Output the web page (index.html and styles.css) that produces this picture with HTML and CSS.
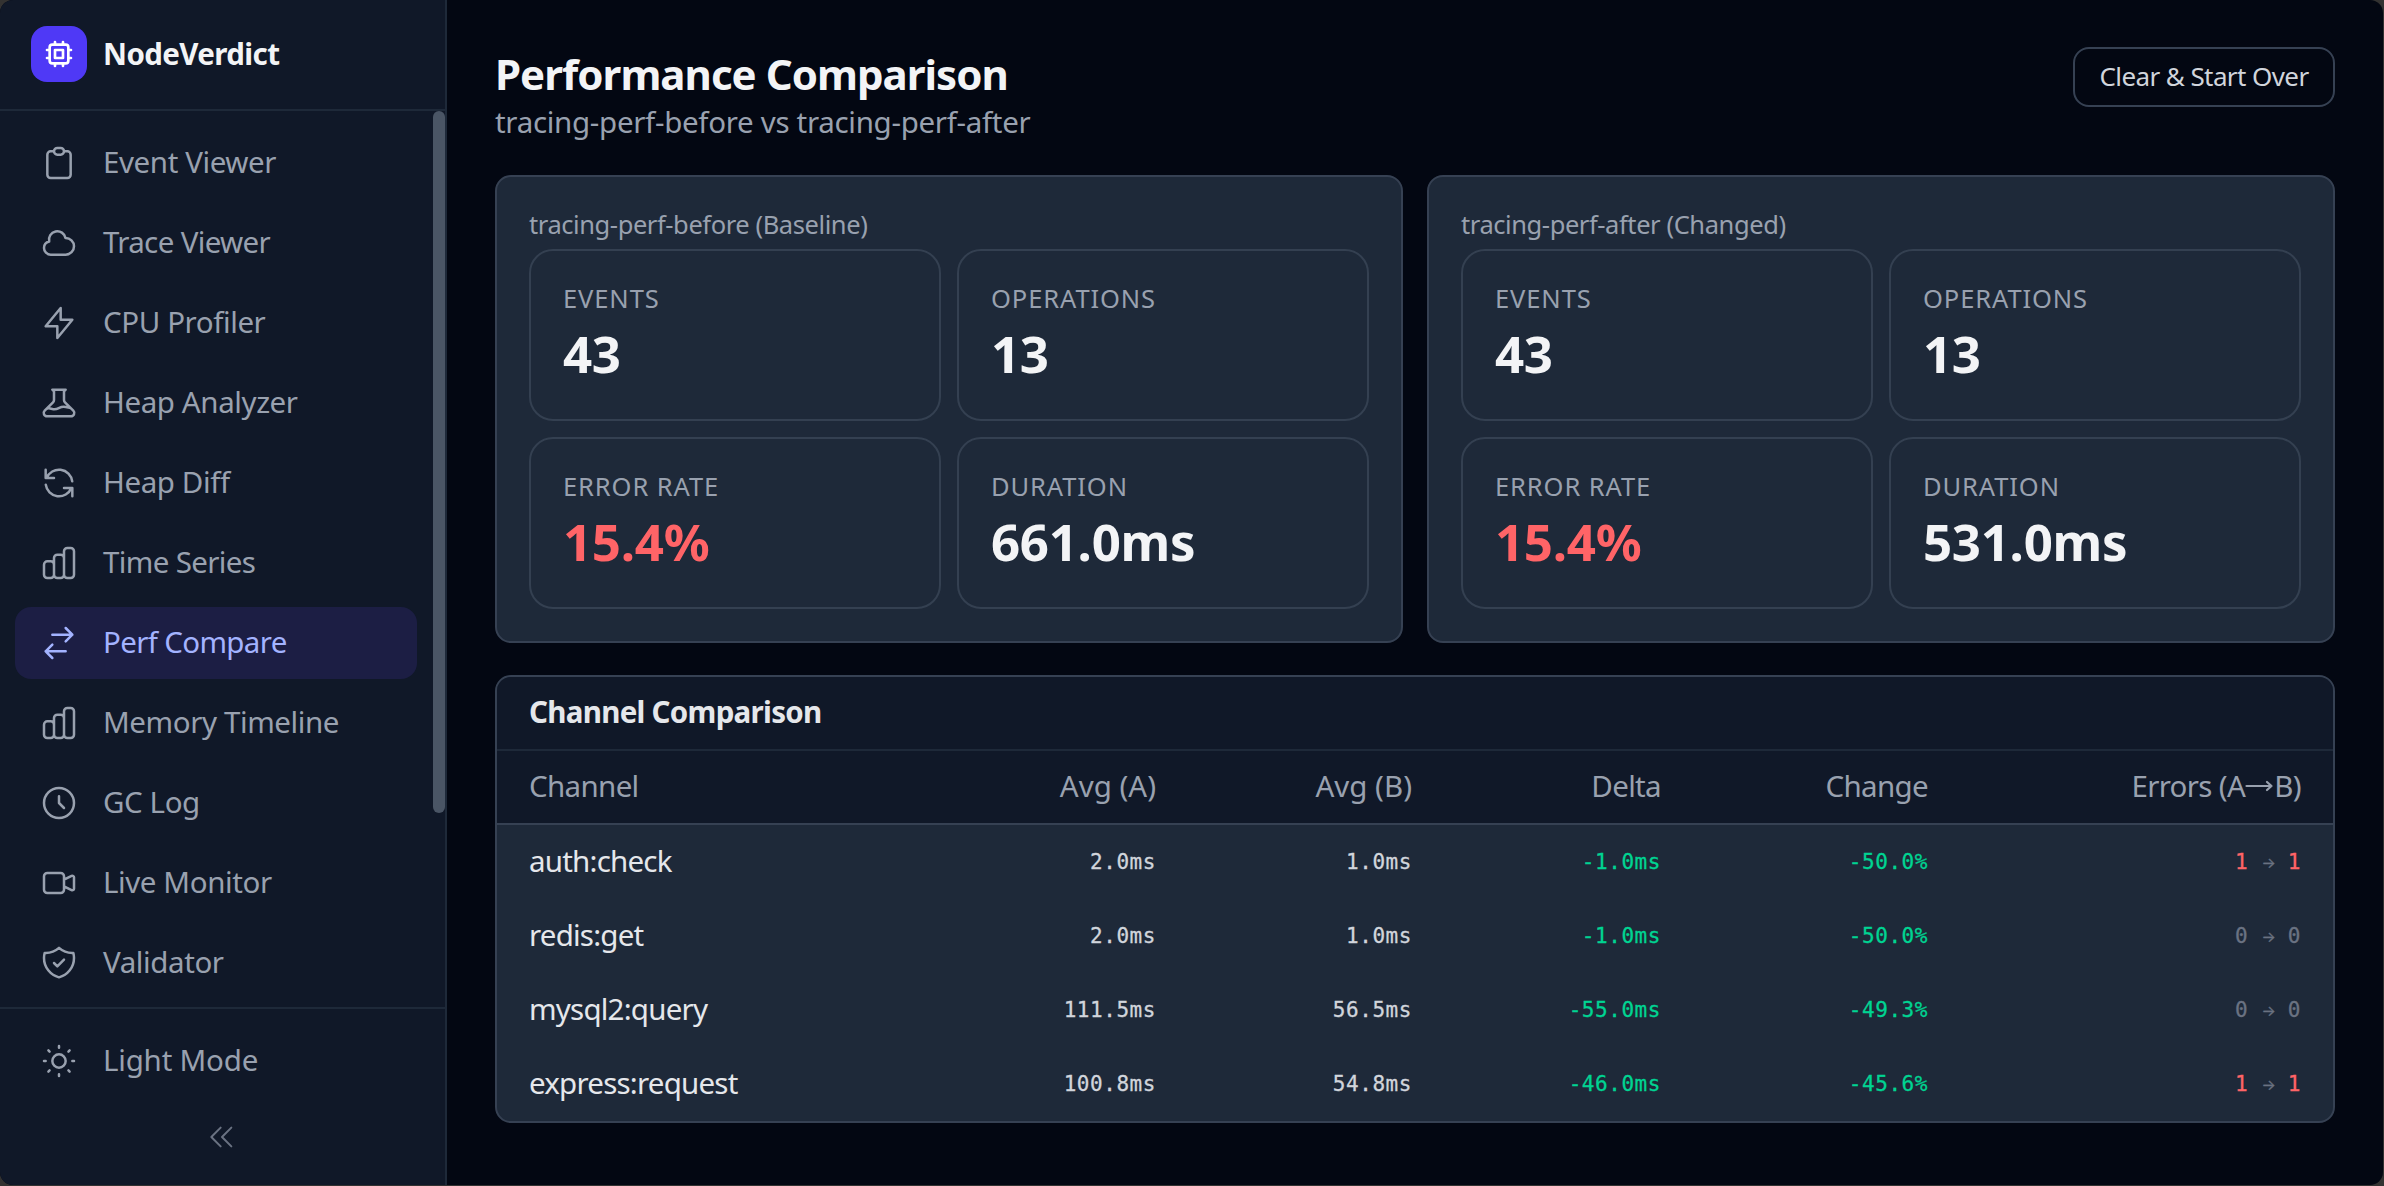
FILE: index.html
```
<!DOCTYPE html>
<html lang="en">
  <head>
    <meta charset="utf-8" />
    <title>NodeVerdict</title>
    <link rel="stylesheet" href="styles.css" />
  </head>
  <body>
    <div class="app">
      <aside class="sidebar">
        <div class="brand">
          <div class="logo">
            <svg viewBox="0 0 24 24"><path d="M9 3v2m6-2v2M9 19v2m6-2v2M5 9H3m2 6H3m18-6h-2m2 6h-2M7 19h10a2 2 0 002-2V7a2 2 0 00-2-2H7a2 2 0 00-2 2v10a2 2 0 002 2zM9 9h6v6H9V9z" /></svg>
          </div>
          <span class="brand-name">NodeVerdict</span>
        </div>
        <div class="nav-scroll">
          <nav class="nav">
            <a class="nav-item">
              <svg viewBox="0 0 24 24"><path d="M9 5H7a2 2 0 00-2 2v12a2 2 0 002 2h10a2 2 0 002-2V7a2 2 0 00-2-2h-2M9 5a2 2 0 002 2h2a2 2 0 002-2M9 5a2 2 0 012-2h2a2 2 0 012 2" /></svg>
              <span>Event Viewer</span>
            </a>
            <a class="nav-item tight">
              <svg viewBox="0 0 24 24"><path d="M3 15a4 4 0 004 4h9a5 5 0 10-.1-9.999 5.002 5.002 0 10-9.78 2.096A4.001 4.001 0 003 15z" /></svg>
              <span>Trace Viewer</span>
            </a>
            <a class="nav-item">
              <svg viewBox="0 0 24 24"><path d="M13 10V3L4 14h7v7l9-11h-7z" /></svg>
              <span>CPU Profiler</span>
            </a>
            <a class="nav-item">
              <svg viewBox="0 0 24 24"><path d="M19.428 15.428a2 2 0 00-1.022-.547l-2.387-.477a6 6 0 00-3.86.517l-.318.158a6 6 0 01-3.86.517L6.05 15.21a2 2 0 00-1.806.547M8 4h8l-1 1v5.172a2 2 0 00.586 1.414l5 5c1.26 1.26.367 3.414-1.415 3.414H4.828c-1.782 0-2.674-2.154-1.414-3.414l5-5A2 2 0 009 10.172V5L8 4z" /></svg>
              <span>Heap Analyzer</span>
            </a>
            <a class="nav-item">
              <svg viewBox="0 0 24 24"><path d="M4 4v5h.582m15.356 2A8.001 8.001 0 004.582 9m0 0H9m11 11v-5h-.581m0 0a8.003 8.003 0 01-15.357-2m15.357 2H15" /></svg>
              <span>Heap Diff</span>
            </a>
            <a class="nav-item tight">
              <svg viewBox="0 0 24 24"><path d="M9 19v-6a2 2 0 00-2-2H5a2 2 0 00-2 2v6a2 2 0 002 2h2a2 2 0 002-2zm0 0V9a2 2 0 012-2h2a2 2 0 012 2v10m-6 0a2 2 0 002 2h2a2 2 0 002-2m0 0V5a2 2 0 012-2h2a2 2 0 012 2v14a2 2 0 01-2 2h-2a2 2 0 01-2-2z" /></svg>
              <span>Time Series</span>
            </a>
            <a class="nav-item tight active">
              <svg viewBox="0 0 24 24"><path d="M8 7h12m0 0l-4-4m4 4l-4 4m0 6H4m0 0l4 4m-4-4l4-4" /></svg>
              <span>Perf Compare</span>
            </a>
            <a class="nav-item">
              <svg viewBox="0 0 24 24"><path d="M9 19v-6a2 2 0 00-2-2H5a2 2 0 00-2 2v6a2 2 0 002 2h2a2 2 0 002-2zm0 0V9a2 2 0 012-2h2a2 2 0 012 2v10m-6 0a2 2 0 002 2h2a2 2 0 002-2m0 0V5a2 2 0 012-2h2a2 2 0 012 2v14a2 2 0 01-2 2h-2a2 2 0 01-2-2z" /></svg>
              <span>Memory Timeline</span>
            </a>
            <a class="nav-item">
              <svg viewBox="0 0 24 24"><path d="M12 8v4l3 3m6-3a9 9 0 11-18 0 9 9 0 0118 0z" /></svg>
              <span>GC Log</span>
            </a>
            <a class="nav-item">
              <svg viewBox="0 0 24 24"><path d="M15 10l4.553-2.276A1 1 0 0121 8.618v6.764a1 1 0 01-1.447.894L15 14M5 18h8a2 2 0 002-2V8a2 2 0 00-2-2H5a2 2 0 00-2 2v8a2 2 0 002 2z" /></svg>
              <span>Live Monitor</span>
            </a>
            <a class="nav-item">
              <svg viewBox="0 0 24 24"><path d="M9 12l2 2 4-4m5.618-4.016A11.955 11.955 0 0112 2.944a11.955 11.955 0 01-8.618 3.04A12.02 12.02 0 003 9c0 5.591 3.824 10.29 9 11.622 5.176-1.332 9-6.03 9-11.622 0-1.042-.133-2.052-.382-3.016z" /></svg>
              <span>Validator</span>
            </a>
          </nav>
          <div class="scroll-thumb"></div>
        </div>
        <div class="sidebar-footer">
          <a class="nav-item">
            <svg viewBox="0 0 24 24"><path d="M12 3v1m0 16v1m9-9h-1M4 12H3m15.364 6.364l-.707-.707M6.343 6.343l-.707-.707m12.728 0l-.707.707M6.343 17.657l-.707.707M16 12a4 4 0 11-8 0 4 4 0 018 0z" /></svg>
            <span>Light Mode</span>
          </a>
          <button class="collapse">
            <svg viewBox="0 0 24 24"><path d="M11 19l-7-7 7-7m8 14l-7-7 7-7" /></svg>
          </button>
        </div>
      </aside>

      <main class="main">
        <header class="page-header">
          <div>
            <h1>Performance Comparison</h1>
            <p class="subtitle">tracing-perf-before vs tracing-perf-after</p>
          </div>
          <button class="clear-btn">Clear &amp; Start Over</button>
        </header>

        <section class="cards">
          <div class="card">
            <h3>tracing-perf-before (Baseline)</h3>
            <div class="stats">
              <div class="stat">
                <div class="stat-label">Events</div>
                <div class="stat-value">43</div>
              </div>
              <div class="stat">
                <div class="stat-label">Operations</div>
                <div class="stat-value">13</div>
              </div>
              <div class="stat">
                <div class="stat-label">Error Rate</div>
                <div class="stat-value bad">15.4%</div>
              </div>
              <div class="stat">
                <div class="stat-label">Duration</div>
                <div class="stat-value">661.0ms</div>
              </div>
            </div>
          </div>
          <div class="card">
            <h3>tracing-perf-after (Changed)</h3>
            <div class="stats">
              <div class="stat">
                <div class="stat-label">Events</div>
                <div class="stat-value">43</div>
              </div>
              <div class="stat">
                <div class="stat-label">Operations</div>
                <div class="stat-value">13</div>
              </div>
              <div class="stat">
                <div class="stat-label">Error Rate</div>
                <div class="stat-value bad">15.4%</div>
              </div>
              <div class="stat">
                <div class="stat-label">Duration</div>
                <div class="stat-value">531.0ms</div>
              </div>
            </div>
          </div>
        </section>

        <section class="panel">
          <h2>Channel Comparison</h2>
          <table>
            <colgroup>
              <col class="col-channel" />
              <col class="col-avg" />
              <col class="col-avg" />
              <col class="col-delta" />
              <col class="col-change" />
              <col class="col-errors" />
            </colgroup>
            <thead>
              <tr>
                <th>Channel</th>
                <th class="paren">Avg (A)</th>
                <th class="paren">Avg (B)</th>
                <th>Delta</th>
                <th>Change</th>
                <th>Errors (A<svg class="arrow" viewBox="0 0 29 14"><path d="M1.500 7h25M22 3l4.500 4-4.500 4" /></svg>B)</th>
              </tr>
            </thead>
            <tbody>
              <tr>
                <td>auth:check</td>
                <td>2.0ms</td>
                <td>1.0ms</td>
                <td class="good">-1.0ms</td>
                <td class="good">-50.0%</td>
                <td class="dim"><span class="bad">1</span> <span class="to">→</span> <span class="bad">1</span></td>
              </tr>
              <tr>
                <td>redis:get</td>
                <td>2.0ms</td>
                <td>1.0ms</td>
                <td class="good">-1.0ms</td>
                <td class="good">-50.0%</td>
                <td class="dim">0 <span class="to">→</span> 0</td>
              </tr>
              <tr>
                <td>mysql2:query</td>
                <td>111.5ms</td>
                <td>56.5ms</td>
                <td class="good">-55.0ms</td>
                <td class="good">-49.3%</td>
                <td class="dim">0 <span class="to">→</span> 0</td>
              </tr>
              <tr>
                <td>express:request</td>
                <td>100.8ms</td>
                <td>54.8ms</td>
                <td class="good">-46.0ms</td>
                <td class="good">-45.6%</td>
                <td class="dim"><span class="bad">1</span> <span class="to">→</span> <span class="bad">1</span></td>
              </tr>
            </tbody>
          </table>
        </section>
      </main>
    </div>
  </body>
</html>
```

FILE: styles.css
```
* {
  box-sizing: border-box;
}
body {
  margin: 0;
  padding: 0 1px 1px 0;
  height: 1186px;
  overflow: hidden;
  background-color: #333231;
  font-family: 'Noto Sans', 'Open Sans', sans-serif;
  font-size: 29.5px;
  letter-spacing: -0.4px;
  color: #f3f4f6;
}
h1,
h2,
h3,
p {
  margin: 0;
}
svg {
  fill: none;
  stroke: currentColor;
  stroke-width: 1.5;
  stroke-linecap: round;
  stroke-linejoin: round;
}
button {
  font: inherit;
  background: none;
  border: none;
  padding: 0;
}
.app {
  display: flex;
  height: 1185px;
  border-radius: 13px;
  overflow: hidden;
  background-color: #030712;
}

/* sidebar */
.sidebar {
  display: flex;
  flex-direction: column;
  flex: none;
  width: 447px;
  background-color: #101828;
  border-right: 2px solid #1e2939;
}
.brand {
  display: flex;
  align-items: center;
  gap: 16px;
  flex: none;
  height: 111px;
  padding: 0 0 1px 31px;
  border-bottom: 2px solid #1e2939;
}
.logo {
  display: flex;
  align-items: center;
  justify-content: center;
  width: 56px;
  height: 56px;
  border-radius: 16px;
  background-color: #4f39f6;
  color: #fff;
}
.logo svg {
  width: 32px;
  height: 32px;
  stroke-width: 2;
}
.brand-name {
  padding-bottom: 2px;
  font-weight: 700;
  letter-spacing: -0.6px;
}
.nav-scroll {
  display: flex;
  flex: 1;
  min-height: 0;
  overflow: hidden;
}
.nav {
  display: flex;
  flex-direction: column;
  gap: 8px;
  flex: 1;
  padding: 16px 16px 0 15px;
}
.nav-item {
  display: flex;
  align-items: center;
  gap: 24px;
  flex: none;
  height: 72px;
  padding: 0 24px;
  border-radius: 16px;
  color: #99a1af;
}
.nav-item svg {
  width: 40px;
  height: 40px;
}
.nav-item span {
  padding-bottom: 3px;
}
.nav-item.tight {
  letter-spacing: -0.65px;
}
.nav-item.active {
  background-color: #1c1e44;
  color: #a3b3ff;
}
.scroll-thumb {
  width: 12px;
  height: 702px;
  border-radius: 6px;
  background-color: #4a5565;
}
.sidebar-footer {
  flex: none;
  height: 178px;
  padding: 16px 16px 0 15px;
  border-top: 2px solid #1e2939;
}
.sidebar-footer .nav-item {
  letter-spacing: -0.2px;
}
.collapse {
  display: flex;
  align-items: center;
  justify-content: center;
  width: 100%;
  height: 80px;
  color: #6a7282;
}
.collapse svg {
  width: 32px;
  height: 32px;
}

/* main */
.main {
  flex: 1;
  padding: 47px 48px 0;
}
.page-header {
  display: flex;
  align-items: flex-start;
  justify-content: space-between;
  height: 128px;
}
h1 {
  font-size: 42px;
  line-height: 54px;
  letter-spacing: -0.97px;
}
.subtitle {
  line-height: 42px;
  letter-spacing: -0.3px;
  color: #99a1af;
}
.clear-btn {
  width: 262px;
  height: 60px;
  padding-bottom: 2px;
  border: 2px solid #364153;
  border-radius: 16px;
  font-size: 26px;
  letter-spacing: -0.59px;
  color: #d1d5dc;
}
.cards {
  display: grid;
  grid-template-columns: 1fr 1fr;
  gap: 24px;
  margin-bottom: 32px;
}
.card {
  padding: 27px 32px 32px;
  border: 2px solid #364153;
  border-radius: 16px;
  background-color: #1e2939;
}
.card h3 {
  margin-bottom: 5px;
  font-size: 25.5px;
  font-weight: 400;
  line-height: 40px;
  letter-spacing: -0.42px;
  color: #99a1af;
}
.stats {
  display: grid;
  grid-template-columns: 1fr 1fr;
  gap: 16px;
}
.stat {
  height: 172px;
  padding: 29px 32px 0;
  border: 2px solid #344051;
  border-radius: 24px;
}
.stat-label {
  margin-bottom: 5px;
  font-size: 25.5px;
  line-height: 36px;
  letter-spacing: 0.9px;
  text-transform: uppercase;
  color: #99a1af;
}
.stat-value {
  font-size: 51px;
  font-weight: 700;
  line-height: 64px;
  letter-spacing: -0.3px;
}

/* channel table */
.panel {
  border: 2px solid #364153;
  border-radius: 16px;
  overflow: hidden;
  background-color: #1e2939;
}
.panel h2 {
  height: 74px;
  padding: 0 32px;
  border-bottom: 2px solid #1e2939;
  background-color: #101828;
  font-size: 29.5px;
  line-height: 70px;
  letter-spacing: -0.7px;
  color: #e5e7eb;
}
table {
  width: 100%;
  table-layout: fixed;
  border-collapse: separate;
  border-spacing: 0;
}
.col-channel {
  width: 435px;
}
.col-avg {
  width: 256px;
}
.col-delta {
  width: 249px;
}
.col-change {
  width: 267px;
}
.col-errors {
  width: 373px;
}
th,
td {
  height: 74px;
  padding: 0 32px;
  text-align: right;
  white-space: nowrap;
}
th {
  padding-bottom: 4px;
  border-bottom: 2px solid #364153;
  background-color: #101828;
  font-weight: 400;
  letter-spacing: -0.65px;
  color: #99a1af;
}
th.paren {
  letter-spacing: 0;
}
th:first-child,
td:first-child {
  text-align: left;
}
td {
  font-family: 'DejaVu Sans Mono', monospace;
  font-size: 21px;
  letter-spacing: 0.55px;
  color: #d1d5dc;
  -webkit-text-stroke: 0.3px currentColor;
}
td:first-child {
  padding-bottom: 4px;
  font-family: 'Noto Sans', 'Open Sans', sans-serif;
  font-size: 29.5px;
  letter-spacing: -0.78px;
  color: #e5e7eb;
  -webkit-text-stroke: 0;
}
.arrow {
  width: 29px;
  height: 14px;
  vertical-align: 4px;
  stroke-width: 2.2;
}
.to {
  display: inline-block;
  width: 13.2px;
  font-family: Inter, sans-serif;
  font-size: 15px;
  letter-spacing: 0;
  line-height: 20px;
  text-align: center;
  vertical-align: 1px;
}
.good {
  color: #00d492;
}
.bad {
  color: #ff6467;
}
.dim {
  color: #6a7282;
}
```
